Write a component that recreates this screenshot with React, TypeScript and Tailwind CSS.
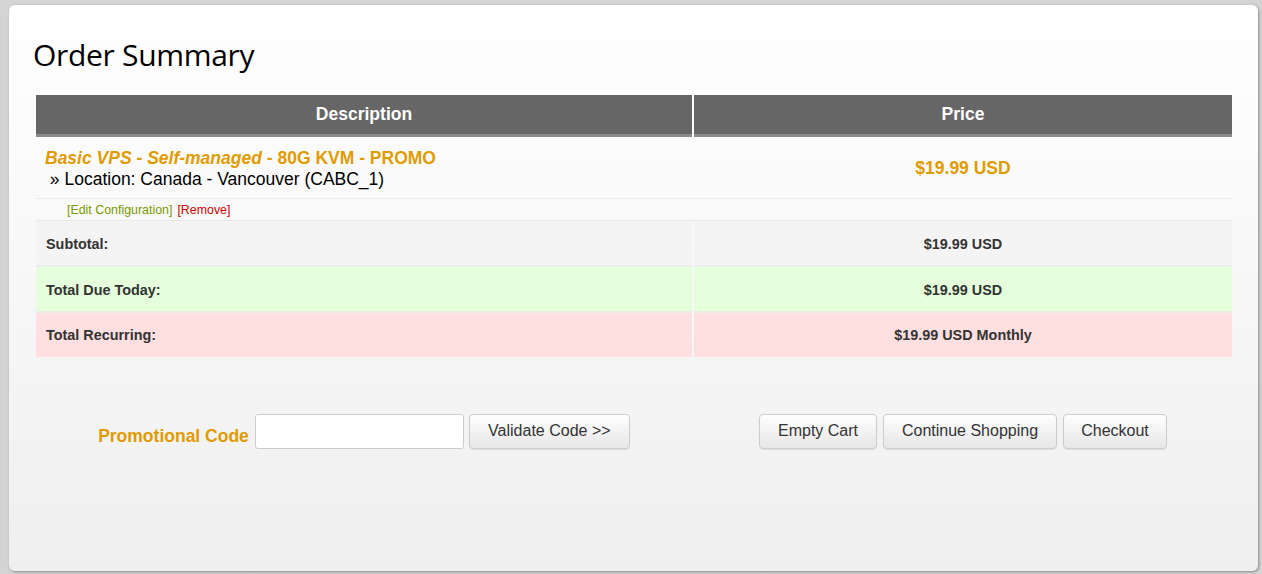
export default function App() {
  return (
    <div className="min-h-[574px] w-full bg-[#d4d4d4] pt-[5px] pl-[9px] font-['Liberation_Sans',Arial,sans-serif]">
      <div className="h-[566px] w-[1249px] rounded-[6px] bg-gradient-to-b from-[#ffffff] to-[#efefef] shadow-[1px_1px_3px_rgba(0,0,0,0.35)] pl-[27px] pt-[30px]">
        <h1 className="font-['Open_Sans',sans-serif] text-[30px] leading-[40px] text-black tracking-[-0.3px] -ml-[3px]">Order Summary</h1>

        <div className="mt-[20px] w-[1196px]">
          {/* header */}
          <div className="grid grid-cols-[656px_538px] gap-x-[2px]">
            <div className="h-[42px] bg-[#666666] border-b-[3px] border-[#8a8a8a] flex items-center justify-center text-white font-bold text-[17.5px]">Description</div>
            <div className="h-[42px] bg-[#666666] border-b-[3px] border-[#8a8a8a] flex items-center justify-center text-white font-bold text-[17.5px]">Price</div>
          </div>

          {/* product */}
          <div className="grid grid-cols-[656px_538px] gap-x-[2px] border-b border-[#ececec]">
            <div className="h-[61px] pl-[9px] pt-[11px] text-[17.5px] leading-[21px]">
              <div className="font-bold text-[#e09b00]">
                <em>Basic VPS - Self-managed</em> - 80G KVM - PROMO
              </div>
              <div className="text-black">&nbsp;» Location: Canada - Vancouver (CABC_1)</div>
            </div>
            <div className="h-[61px] pt-[1px] flex items-center justify-center font-bold text-[17.5px] text-[#e09b00]">$19.99 USD</div>
          </div>
          <div className="grid grid-cols-[656px_538px] gap-x-[2px] border-b border-[#e8e8e8]">
            <div className="h-[21px] pl-[31px] flex items-center text-[12.4px] pt-[2px]">
              <a className="text-[#7a9a00]">[Edit Configuration]</a>
              <a className="ml-[5px] text-[#cc0000]">[Remove]</a>
            </div>
            <div className="h-[21px]" />
          </div>

          {/* totals */}
          <div className="grid grid-cols-[656px_538px] gap-x-[2px] text-[14.4px] font-bold text-[#333333]">
            <div className="h-[46px] bg-[#f4f4f4] border-b-[2px] border-[#ebebeb] pl-[10px] pt-[3px] flex items-center">Subtotal:</div>
            <div className="h-[46px] bg-[#f4f4f4] border-b-[2px] border-[#ebebeb] pt-[3px] flex items-center justify-center">$19.99 USD</div>
            <div className="h-[46px] bg-[#e5ffdc] border-b-[2px] border-[#ebebeb] pl-[10px] pt-[3px] flex items-center">Total Due Today:</div>
            <div className="h-[46px] bg-[#e5ffdc] border-b-[2px] border-[#ebebeb] pt-[3px] flex items-center justify-center">$19.99 USD</div>
            <div className="h-[44px] bg-[#ffdfdf] pl-[10px] pt-[2px] flex items-center">Total Recurring:</div>
            <div className="h-[44px] bg-[#ffdfdf] pt-[2px] flex items-center justify-center">$19.99 USD Monthly</div>
          </div>

          {/* actions */}
          <div className="mt-[56px] grid grid-cols-[656px_538px] gap-x-[2px]">
            <div className="flex items-center justify-center">
              <span className="mt-[10px] mr-[6px] text-[17.5px] font-bold text-[#e09b00]">Promotional Code</span>
              <input type="text" className="h-[35px] w-[209px] rounded-[3px] border border-[#cccccc] bg-white outline-none" />
              <button className="ml-[5px] h-[35px] w-[161px] rounded-[4px] border border-[#cccccc] bg-gradient-to-b from-[#ffffff] to-[#e6e6e6] text-[16px] text-[#333333] shadow-[0_1px_1px_rgba(0,0,0,0.08)]">Validate Code &gt;&gt;</button>
            </div>
            <div className="flex items-center justify-center gap-[6px]">
              <button className="h-[35px] w-[118px] rounded-[4px] border border-[#cccccc] bg-gradient-to-b from-[#ffffff] to-[#e6e6e6] text-[16px] text-[#333333] shadow-[0_1px_1px_rgba(0,0,0,0.08)]">Empty Cart</button>
              <button className="h-[35px] w-[174px] rounded-[4px] border border-[#cccccc] bg-gradient-to-b from-[#ffffff] to-[#e6e6e6] text-[16px] text-[#333333] shadow-[0_1px_1px_rgba(0,0,0,0.08)]">Continue Shopping</button>
              <button className="h-[35px] w-[104px] rounded-[4px] border border-[#cccccc] bg-gradient-to-b from-[#ffffff] to-[#e6e6e6] text-[16px] text-[#333333] shadow-[0_1px_1px_rgba(0,0,0,0.08)]">Checkout</button>
            </div>
          </div>
        </div>
      </div>
    </div>
  );
}
